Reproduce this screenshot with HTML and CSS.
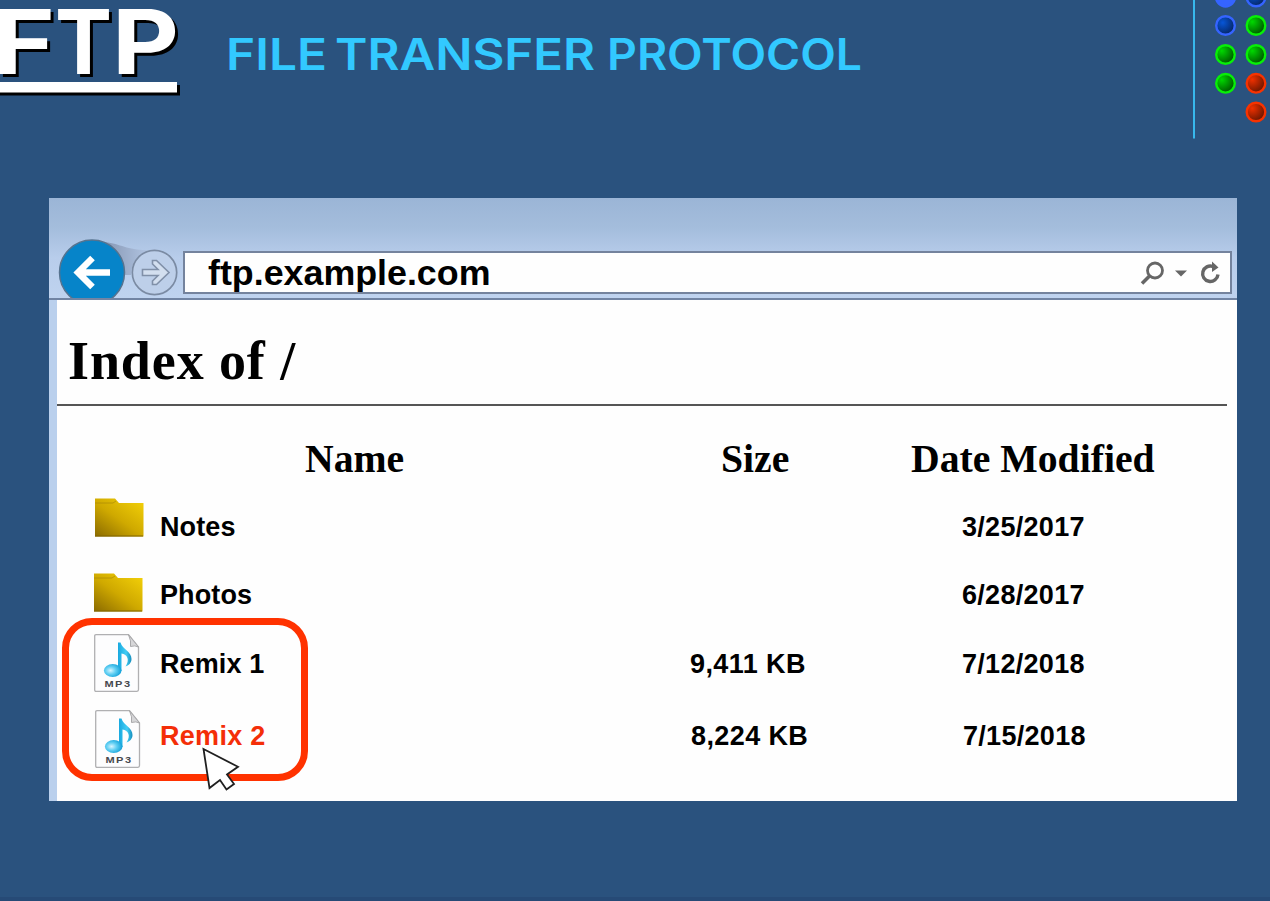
FILE: index.html
```
<!DOCTYPE html>
<html lang="en">
<head>
<meta charset="utf-8">
<title>File Transfer Protocol</title>
<link rel="stylesheet" href="styles.css">
</head>
<body>
<header class="banner">
  <svg class="logo" width="200" height="110" viewBox="0 0 200 110">
    <g class="logo-mark">
      <text x="-7" y="73.500" textLength="62" lengthAdjust="spacingAndGlyphs">F</text>
      <text x="55" y="73.500" textLength="57" lengthAdjust="spacingAndGlyphs">T</text>
      <text x="112" y="73.500" textLength="67" lengthAdjust="spacingAndGlyphs">P</text>
      <rect x="-5" y="82" width="182" height="10.500"/>
    </g>
  </svg>
  <svg class="title" width="680" height="110" viewBox="0 0 680 110">
    <text x="26" y="70" textLength="101" lengthAdjust="spacingAndGlyphs">FILE</text>
    <text x="135" y="70" textLength="260" lengthAdjust="spacingAndGlyphs">TRANSFER</text>
    <text x="407" y="70" textLength="255" lengthAdjust="spacingAndGlyphs">PROTOCOL</text>
  </svg>
  <svg class="lights" width="80" height="142" viewBox="0 0 80 142">
    <defs>
      <radialGradient id="blue" cx=".35" cy=".35" r=".7"><stop offset="0" stop-color="#0756d8"/><stop offset="1" stop-color="#06245f"/></radialGradient>
      <radialGradient id="green" cx=".3" cy=".3" r=".75"><stop offset="0" stop-color="#00d900"/><stop offset="1" stop-color="#005500"/></radialGradient>
      <radialGradient id="red" cx=".3" cy=".3" r=".75"><stop offset="0" stop-color="#ef3000"/><stop offset="1" stop-color="#681600"/></radialGradient>
    </defs>
    <rect x="3" y="0" width="2" height="138.500" fill="#38b8ec"/>
    <g stroke-width="2.400">
      <circle cx="35.500" cy="-3" r="9.500" fill="#3564ff" stroke="#3564ff"/>
      <g fill="url(#blue)" stroke="#3564ff"><circle cx="66" cy="-3" r="9.300"/><circle cx="35.500" cy="25.500" r="9.300"/></g>
      <g fill="url(#green)" stroke="#08ef08"><circle cx="66" cy="25.500" r="9.300"/><circle cx="35.500" cy="54.500" r="9.300"/><circle cx="66" cy="54.500" r="9.300"/><circle cx="35.500" cy="83.300" r="9.300"/></g>
      <g fill="url(#red)" stroke="#f73300"><circle cx="66" cy="83.300" r="9.300"/><circle cx="66" cy="112" r="9.300"/></g>
    </g>
  </svg>
</header>

<main class="window">
  <div class="toolbar">
    <svg class="nav" width="134" height="61" viewBox="49 239 134 61">
      <defs><linearGradient id="swoosh" x1="0" x2="1"><stop offset="0" stop-color="#8798b5"/><stop offset="1" stop-color="#b4c7e4"/></linearGradient></defs>
      <path d="M105 242C122 244 128 251 151 250C136 254 131 264 131 275H120Z" fill="url(#swoosh)"/>
      <circle cx="92" cy="272.500" r="32.500" fill="#0684c9" stroke="#56738f" stroke-width="1.500"/>
      <path d="M110 272.500H78M92.500 258L78 272.500L92.500 287" fill="none" stroke="#fff" stroke-width="6.500"/>
      <circle cx="154.500" cy="272.500" r="22.200" fill="#bdcfe9" stroke="#7b8ba3" stroke-width="1.700"/>
      <path d="M142.500 269.500H158L152.500 264V260.500H156.500L169 272.500L156.500 284.500H152.500V281L158 275.500H142.500Z" fill="#d3dfef" stroke="#8090a8" stroke-width="1.600"/>
    </svg>
    <div class="address">
      <span>ftp.example.com</span>
      <svg width="86" height="38" viewBox="1138 254 86 38" fill="none" stroke="#666">
        <circle cx="1155" cy="270.500" r="7.500" stroke-width="2.800"/>
        <path d="M1149.500 276L1142 283.500" stroke-width="3.600"/>
        <path d="M1175 270.500H1187L1181 276.500Z" fill="#666" stroke="none"/>
        <path d="M1213 266.500A7.700 7.700 0 1 0 1218 274.500" stroke-width="3.400"/>
        <path d="M1212 261.500L1218.500 267.500L1212 272Z" fill="#666" stroke="none"/>
      </svg>
    </div>
  </div>
  <section class="page">
    <h1>Index of /</h1>
    <div class="listing">
      <div class="row head"><span class="name-head">Name</span><span class="size-head">Size</span><span class="date-head">Date Modified</span></div>
      <div class="row short">
        <svg class="icon folder" width="50" height="40" viewBox="0 0 50 40">
          <defs><linearGradient id="gold" x1="0" y1="1" x2=".9" y2="0"><stop offset="0" stop-color="#8a6a00"/><stop offset=".5" stop-color="#cfa900"/><stop offset="1" stop-color="#f2cf08"/></linearGradient></defs>
          <path id="folder" d="M0 0.500H20L24 5H48.500V38.500H0Z" fill="url(#gold)"/>
          <path d="M0 5H18L21 3" fill="none" stroke="#a38408" stroke-opacity=".6"/><path d="M0 38H48" stroke="#806500"/>
        </svg>
        <span class="file">Notes</span><span></span><span class="date">3/25/2017</span>
      </div>
      <div class="row short">
        <svg class="icon folder second" width="50" height="40" viewBox="0 0 50 40">
          <use href="#folder"/><path d="M0 5H18L21 3" fill="none" stroke="#a38408" stroke-opacity=".6"/><path d="M0 38H48" stroke="#806500"/>
        </svg>
        <span class="file">Photos</span><span></span><span class="date">6/28/2017</span>
      </div>
      <div class="row medium">
        <svg class="icon track" width="46" height="59" viewBox="0 0 46 59">
          <defs>
            <linearGradient id="note" x1="0" x2="1"><stop offset="0" stop-color="#18a8df"/><stop offset=".6" stop-color="#43cdf5"/><stop offset="1" stop-color="#168ebd"/></linearGradient>
            <radialGradient id="bead" cx=".38" cy=".5" r=".65"><stop offset="0" stop-color="#d8f5ff"/><stop offset=".45" stop-color="#61cff3"/><stop offset="1" stop-color="#079bd6"/></radialGradient>
          </defs>
          <g id="mp3">
            <path d="M.7 2Q.7 .7 2 .7H34.500L44.500 13V55.500Q44.500 57.300 43 57.300H2Q.7 57.300 .7 56Z" fill="#fdfdfe" stroke="#b0b0b2" stroke-width="1.300"/>
            <path d="M34.500 .7Q37.500 7 36.500 12.500Q41 11 44.500 13Z" fill="#d7d7d9" stroke="#a9a9ab"/>
            <path d="M24 8.500H26.500C28.500 15.500 37.500 17.500 37.500 25C37.500 29 34.500 31.500 31.500 32.500C36 26 33.500 20.500 27.500 19.500V37H24Z" fill="url(#note)"/>
            <ellipse cx="18.700" cy="36.500" rx="8.800" ry="6.500" fill="url(#bead)"/>
            <text x="10.500" y="53" textLength="27" lengthAdjust="spacingAndGlyphs">MP3</text>
          </g>
        </svg>
        <span class="file">Remix 1</span><span class="size">9,411 KB</span><span class="date">7/12/2018</span>
      </div>
      <div class="row tall">
        <svg class="icon track second" width="46" height="59" viewBox="0 0 46 59"><use href="#mp3"/></svg>
        <span class="file active">Remix 2</span><span class="size later">8,224 KB</span><span class="date later">7/15/2018</span>
      </div>
    </div>
  </section>
  <div class="highlight"></div>
  <svg class="cursor" width="40" height="46" viewBox="200 747 40 46">
    <path d="M203.500 749L238 766.800L227 774.500L234 784L226.500 789.500L220 780L209.500 788Z" fill="#fff" stroke="#202020" stroke-width="1.800" stroke-linejoin="miter"/>
  </svg>
</main>
</body>
</html>
```
FILE: styles.css
```
* { box-sizing: border-box; }
body {
  margin: 0;
  width: 1270px;
  height: 901px;
  overflow: hidden;
  background: #2a527e;
  border-bottom: 4px solid #264a76;
  font-family: "Liberation Sans", Arial, sans-serif;
  color: #000;
}
svg { display: block; flex: none; }
.banner { display: flex; height: 198px; }
.logo-mark {
  font: 700 89px Inter, sans-serif;
  fill: #fff;
  filter: drop-shadow(3.5px 3.5px 0 #000);
}
.title { font: 600 43.5px Inter, sans-serif; fill: #32c9ff; }
.lights { margin-left: auto; }

.window {
  position: relative;
  width: 1188px;
  height: 603px;
  margin-left: 49px;
  background: #fefefe;
}
.toolbar {
  display: flex;
  align-items: flex-end;
  height: 102px;
  background: linear-gradient(#9bb5d6, #a4bddc 30%, #b8cdeb 60%, #bfd3ef);
  border-bottom: 2px solid #7184a3;
}
.nav { margin-bottom: -2px; height: 61px; clip-path: inset(0 0 2px 0); }
.address {
  display: flex;
  align-items: center;
  justify-content: space-between;
  width: 1049px;
  height: 43px;
  margin-bottom: 4px;
  padding: 0 6px 0 23px;
  border: 2px solid #74839d;
  background: #fefefe;
  font-weight: bold;
  font-size: 35.8px;
}
.address span { padding-top: 2px; }
.page {
  height: 501px;
  border-left: 8px solid #bad0ed;
}
h1 {
  width: 1170px;
  height: 106px;
  margin: 0;
  padding: 31px 0 0 11px;
  border-bottom: 2px solid #555;
  font: bold 54px/60px "Liberation Serif", "Times New Roman", serif;
  letter-spacing: .9px;
}
.row {
  display: grid;
  grid-template-columns: 103px 461px 284px 250px;
  align-items: center;
  font-weight: bold;
  font-size: 27px;
}
.head {
  height: 87px;
  grid-template-columns: 595px 205px 247px;
  align-items: start;
  padding-top: 30px;
  font: bold 39.7px/46px "Liberation Serif", "Times New Roman", serif;
  font-variant-ligatures: none;
}
.name-head { padding-left: 248px; }
.size-head { padding-left: 69px; }
.date-head { padding-left: 54px; white-space: nowrap; }
.short { height: 68px; }
.medium { height: 70px; }
.tall { height: 75px; }
.icon { align-self: start; margin-left: 37px; }
.folder { margin: 5px 0 0 38px; }
.folder.second { margin: 12px 0 0 37px; }
.track { margin-top: 5px; }
.track.second { margin: 11px 0 0 38px; }
#mp3 text {
  font: bold 9px "Liberation Sans", Arial, sans-serif;
  letter-spacing: 1.2px;
  fill: #45484e;
}
.file { letter-spacing: .1px; }
.size { padding-left: 69px; letter-spacing: .4px; }
.date { padding-left: 57px; letter-spacing: .3px; }
.size.later { padding-left: 70px; }
.date.later { padding-left: 58px; }
.active { color: #f42e08; letter-spacing: .3px; }
.highlight {
  position: absolute;
  left: 13px;
  top: 420px;
  width: 246px;
  height: 163px;
  border: 7px solid #ff3200;
  border-radius: 30px;
}
.cursor { position: absolute; left: 151px; top: 549px; }
```
